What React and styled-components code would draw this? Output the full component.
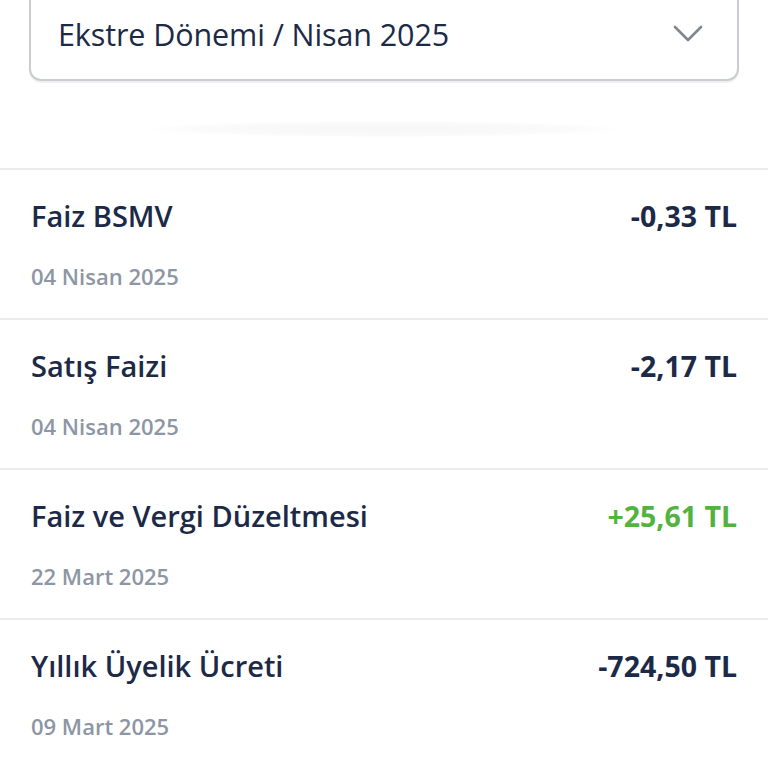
import React from "react"
import styled, { createGlobalStyle } from "styled-components"

const GlobalStyle = createGlobalStyle`
  html, body {
    margin: 0;
    padding: 0;
    background: #fff;
    font-family: "Open Sans", "Noto Sans", sans-serif;
  }
`

const Page = styled.div`
  width: 768px;
  height: 768px;
  overflow: hidden;
  background: #fff;
`

const SelectWrap = styled.div`
  padding: 0 29px;
`

const SelectBox = styled.div`
  margin-top: -12px;
  height: 93px;
  box-sizing: border-box;
  border: 2px solid #c9ccd1;
  border-top: none;
  border-radius: 0 0 12px 12px;
  box-shadow: 0 2px 1px rgba(0, 0, 0, 0.06);
  display: flex;
  align-items: center;
  justify-content: space-between;
  padding: 0 34px 0 27px;
`

const SelectLabel = styled.span`
  font-size: 30.5px;
  font-weight: 500;
  color: #1c2a48;
  letter-spacing: -0.1px;
`

const Shade = styled.div`
  height: 16px;
  margin: 40px auto 31px;
  width: 460px;
  background: radial-gradient(ellipse at center, rgba(0, 0, 0, 0.035) 0%, rgba(0, 0, 0, 0.02) 55%, rgba(0, 0, 0, 0) 75%);
`

const List = styled.div`
  display: flex;
  flex-direction: column;
`

const Row = styled.div`
  height: 150px;
  box-sizing: border-box;
  border-top: 2px solid #ececee;
  padding: 26px 31px 0 31px;
  display: flex;
  flex-direction: column;
  gap: 26px;
`

const TopLine = styled.div`
  display: flex;
  justify-content: space-between;
  align-items: baseline;
`

const Title = styled.span`
  font-size: 29px;
  font-weight: 600;
  color: #1c2a47;
`

const Amount = styled.span`
  font-size: 28.5px;
  font-weight: 700;
  color: ${(p) => (p.$positive ? "#52b33e" : "#1c2a47")};
`

const DateText = styled.span`
  font-size: 22px;
  font-weight: 600;
  color: #8d96a4;
`

const Chevron = () => (
  <svg width="30" height="18" viewBox="0 0 30 18" fill="none">
    <path d="M2 2 L15 15 L28 2" stroke="#7f8791" strokeWidth="2.6" strokeLinecap="round" strokeLinejoin="round" />
  </svg>
)

const items = [
  { title: "Faiz BSMV", date: "04 Nisan 2025", amount: "-0,33 TL" },
  { title: "Satış Faizi", date: "04 Nisan 2025", amount: "-2,17 TL" },
  { title: "Faiz ve Vergi Düzeltmesi", date: "22 Mart 2025", amount: "+25,61 TL", positive: true },
  { title: "Yıllık Üyelik Ücreti", date: "09 Mart 2025", amount: "-724,50 TL" },
]

const App = () => (
  <Page>
    <GlobalStyle />
    <SelectWrap>
      <SelectBox>
        <SelectLabel>Ekstre Dönemi / Nisan 2025</SelectLabel>
        <Chevron />
      </SelectBox>
    </SelectWrap>
    <Shade />
    <List>
      {items.map((item) => (
        <Row key={item.title}>
          <TopLine>
            <Title>{item.title}</Title>
            <Amount $positive={item.positive}>{item.amount}</Amount>
          </TopLine>
          <DateText>{item.date}</DateText>
        </Row>
      ))}
    </List>
  </Page>
)

export default App
